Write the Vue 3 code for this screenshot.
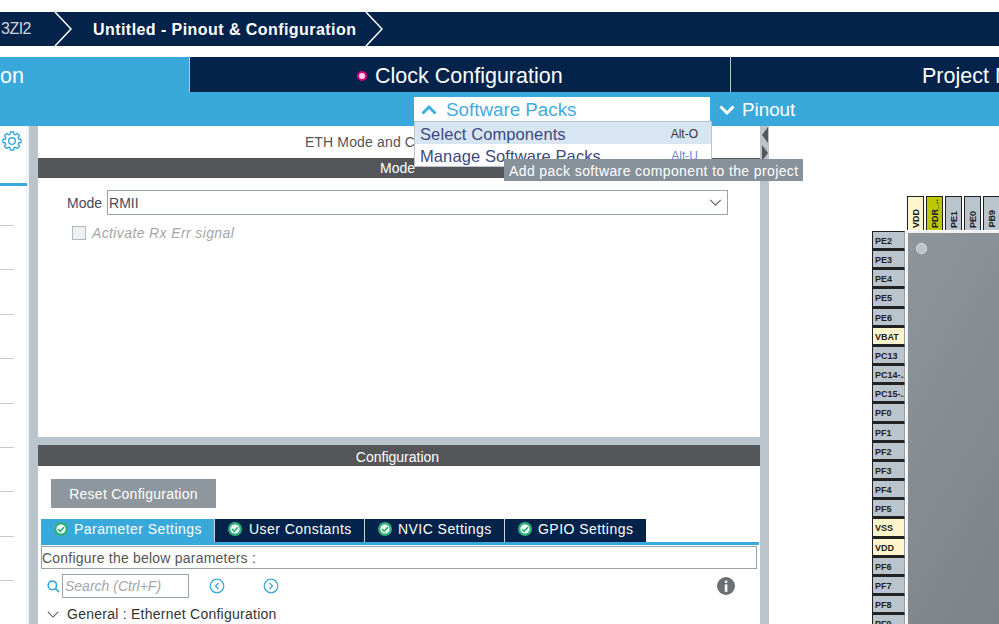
<script setup>
const leftPins = [
  ['PE2'], ['PE3'], ['PE4'], ['PE5'], ['PE6'], ['VBAT', 'power'], ['PC13'], ['PC14-..'], ['PC15-..'],
  ['PF0'], ['PF1'], ['PF2'], ['PF3'], ['PF4'], ['PF5'], ['VSS', 'power'], ['VDD', 'power'],
  ['PF6'], ['PF7'], ['PF8'], ['PF9']
]
const topPins = [['VDD', 'power'], ['PDR_..', 'lime'], ['PE1'], ['PE0'], ['PB9']]
const tabs = ['User Constants', 'NVIC Settings', 'GPIO Settings']
const ticks = 9

// outline of an eight-toothed gear around (12, 12)
const gearPath = (() => {
  const pt = (r, a) => `${(12 + r * Math.cos(a)).toFixed(2)} ${(12 + r * Math.sin(a)).toFixed(2)}`
  const step = Math.PI / 4
  let d = ''
  for (let i = 0; i < 8; i++) {
    const a = i * step
    d += `${i ? 'L' : 'M'}${pt(8.3, a - 0.3)} L${pt(11, a - 0.17)} L${pt(11, a + 0.17)} L${pt(8.3, a + 0.3)} `
  }
  return d + 'Z'
})()
</script>

<template>
  <div class="page">
    <div class="crumbs">
      <span class="crumb-mcu">3ZI2</span>
      <svg class="chev first" viewBox="0 0 18 34"><path d="M1 0 L17 17 L1 34" /></svg>
      <span class="crumb-title">Untitled - Pinout &amp; Configuration</span>
      <svg class="chev second" viewBox="0 0 18 34"><path d="M1 0 L17 17 L1 34" /></svg>
    </div>

    <div class="maintabs">
      <div class="mt active"><span>on</span></div>
      <div class="mt clock"><i class="dot"></i><span>Clock Configuration</span></div>
      <div class="mt project"><span>Project Manager</span></div>
    </div>

    <div class="subbar">
      <div class="sp-btn">
        <svg class="caret" viewBox="0 0 16 10"><path d="M1.5 8.5 L8 2 L14.5 8.5" /></svg>
        <span>Software Packs</span>
      </div>
      <div class="pinout-btn">
        <svg class="caret" viewBox="0 0 16 10"><path d="M1.5 1.5 L8 8 L14.5 1.5" /></svg>
        <span>Pinout</span>
      </div>
      <div class="menu">
        <div class="mi hover"><span>Select Components</span><small>Alt-O</small></div>
        <div class="mi"><span>Manage Software Packs</span><small class="blue">Alt-U</small></div>
      </div>
      <div class="tooltip">Add pack software component to the project</div>
    </div>

    <div class="work">
      <aside class="side">
        <svg class="gear" viewBox="0 0 24 24">
          <path :d="gearPath" />
          <circle cx="12" cy="12" r="4" />
        </svg>
        <div class="side-line"></div>
        <div class="ticks"><i v-for="n in ticks" :key="n"></i></div>
      </aside>

      <div class="split-v"></div>

      <main class="panel">
        <section class="mode-area">
          <div class="eth-title">ETH Mode and Configuration</div>
          <div class="bar mode-bar">Mode</div>
          <div class="mode-row">
            <label>Mode</label>
            <div class="select">
              <span>RMII</span>
              <svg viewBox="0 0 14 8"><path d="M1 1 L7 7 L13 1" /></svg>
            </div>
          </div>
          <div class="check-row"><i class="check"></i><em>Activate Rx Err signal</em></div>
        </section>

        <div class="split-h"></div>

        <section class="config-area">
          <div class="bar cfg">Configuration</div>
          <button class="reset">Reset Configuration</button>
          <div class="ctabs">
            <div class="ctab on">
              <svg class="ok" viewBox="0 0 14 14"><circle cx="7" cy="7" r="5.8" /><path d="M4 7.2 L6.2 9.3 L10 5.2" /></svg>
              <span>Parameter Settings</span>
            </div>
            <div v-for="t in tabs" :key="t" class="ctab">
              <svg class="ok" viewBox="0 0 14 14"><circle cx="7" cy="7" r="5.8" /><path d="M4 7.2 L6.2 9.3 L10 5.2" /></svg>
              <span>{{ t }}</span>
            </div>
          </div>
          <div class="tab-rule"></div>
          <div class="describe">Configure the below parameters :</div>
          <div class="search-row">
            <svg class="mag" viewBox="0 0 14 14"><circle cx="5.8" cy="5.8" r="4.5" /><path d="M9 9 L13 13" /></svg>
            <div class="search">Search (Ctrl+F)</div>
            <svg class="nav prev" viewBox="0 0 16 16"><circle cx="8" cy="8" r="6.8" /><path d="M9.5 5 L6.5 8 L9.5 11" /></svg>
            <svg class="nav next" viewBox="0 0 16 16"><circle cx="8" cy="8" r="6.8" /><path d="M6.5 5 L9.5 8 L6.5 11" /></svg>
            <svg class="info" viewBox="0 0 18 18"><circle cx="9" cy="9" r="9" /><rect x="7.8" y="3.4" width="2.6" height="2.6" rx="1.2" /><rect x="7.8" y="7.4" width="2.6" height="7.4" /></svg>
          </div>
          <div class="general">
            <svg viewBox="0 0 14 8"><path d="M1 1 L7 7 L13 1" /></svg>
            <span>General : Ethernet Configuration</span>
          </div>
        </section>
      </main>

      <div class="split-r">
        <i class="tri left"></i>
        <i class="tri right"></i>
      </div>

      <div class="pinout">
        <div class="top-pins">
          <div v-for="p in topPins" :key="p[0]" class="tpin" :class="p[1]"><span>{{ p[0] }}</span></div>
        </div>
        <div class="chip-row">
          <div class="left-pins">
            <div v-for="p in leftPins" :key="p[0] + p[1]" class="lpin" :class="p[1]">{{ p[0] }}</div>
          </div>
          <div class="chip"><i class="pin1"></i></div>
        </div>
      </div>
    </div>
  </div>
</template>

<style>
html, body { margin: 0; background: #fff; overflow: hidden; }
</style>

<style scoped>
.page {
  width: 999px;
  height: 624px;
  overflow: hidden;
  background: #fff;
  font-family: "Liberation Sans", Arial, sans-serif;
  color: #333;
  display: flex;
  flex-direction: column;
}
.crumbs {
  margin-top: 12px;
  height: 34px;
  background: #03234b;
  color: #fff;
  display: flex;
  align-items: center;
  flex: none;
}
.crumb-mcu { margin-left: 1px; width: 53px; font-size: 16px; color: #cdd5de; letter-spacing: -.5px; }
.chev { width: 18px; height: 34px; flex: none; }
.chev path { fill: none; stroke: #fff; stroke-width: 1.5; }
.crumb-title { margin: 0 9px 0 21px; padding-top: 2px; font-size: 16px; font-weight: 700; letter-spacing: .44px; white-space: nowrap; }

.maintabs {
  margin-top: 11px;
  height: 35px;
  display: flex;
  flex: none;
  font-size: 21.5px;
  color: #fff;
}
.mt { display: flex; align-items: center; white-space: nowrap; overflow: hidden; box-sizing: border-box; padding-top: 4px; }
.active { width: 189px; background: #39a9dc; }
.clock { width: 541px; background: #03234b; padding-left: 167px; border-left: 1px solid #b9c4cc; }
.project { flex: 1; background: #03234b; padding-left: 191px; border-left: 1px solid #b9c4cc; }
.dot { width: 10px; height: 10px; border-radius: 50%; background: #f7d5e8; border: 2.5px solid #e6007e; box-sizing: border-box; margin: 0 8px 2px 0; flex: none; }

.subbar {
  position: relative;
  height: 34px;
  background: #39a9dc;
  flex: none;
  display: flex;
  align-items: flex-end;
  padding-left: 414px;
  z-index: 2;
}
.sp-btn {
  width: 296px;
  height: 29px;
  box-sizing: border-box;
  background: #fff;
  color: #3fade0;
  font-size: 18.8px;
  display: flex;
  align-items: center;
  gap: 9px;
  padding: 0 0 4px 7px;
}
.pinout-btn {
  height: 29px;
  box-sizing: border-box;
  display: flex;
  align-items: center;
  gap: 7px;
  padding: 0 0 4px 9px;
  color: #fff;
  font-size: 18.8px;
}
.caret { width: 16px; height: 10px; flex: none; fill: none; stroke: currentColor; stroke-width: 2.9; }
.menu {
  position: absolute;
  left: 414px;
  top: 29px;
  width: 298px;
  height: 46px;
  box-sizing: border-box;
  background: #fff;
  border: 1px solid #b9c4cc;
  color: #3d4a80;
  font-size: 16.5px;
  letter-spacing: .1px;
}
.mi { height: 22px; box-sizing: border-box; padding: 2px 13px 0 5px; display: flex; align-items: center; justify-content: space-between; }
.mi.hover { background: #d7e6f2; }
.mi small { font-size: 12px; letter-spacing: 0; color: #333; }
.mi small.blue { color: #6f86d6; }
.tooltip {
  position: absolute;
  left: 504px;
  top: 67px;
  width: 299px;
  height: 22px;
  box-sizing: border-box;
  background: #87919a;
  color: #fff;
  font-size: 14px;
  letter-spacing: .39px;
  line-height: 24px;
  padding-left: 5px;
  white-space: nowrap;
}

.work { flex: 1; display: flex; min-height: 0; }
.side { width: 26px; flex: none; position: relative; border-right: 3px solid #f1f3f4; display: flex; flex-direction: column; }
.gear { width: 20px; height: 20px; margin: 5px 0 0 2px; flex: none; fill: none; stroke: #39a9dc; stroke-width: 1.7; stroke-linejoin: round; }
.side-line { height: 3px; width: 27px; background: #39a9dc; margin-top: 32px; flex: none; }
.ticks { display: flex; flex-direction: column; gap: 43.4px; margin-top: 39px; }
.ticks i { display: block; width: 14px; height: 1px; background: #c3cbd0; }
.split-v { width: 9px; flex: none; background: #b9c4cc; }
.panel { width: 722px; flex: none; display: flex; flex-direction: column; background: #fff; }
.mode-area { height: 311px; flex: none; }
.eth-title { height: 32px; line-height: 32px; padding-right: 3px; text-align: center; font-size: 14px; color: #555; letter-spacing: .15px; }
.bar { height: 21px; line-height: 21px; padding-right: 3px; background: #54565a; color: #fff; text-align: center; font-size: 14px; }
.bar.mode-bar { height: 20px; }
.bar.cfg { line-height: 24px; }
.mode-row { display: flex; align-items: center; margin: 12px 0 0 29px; gap: 5px; }
.mode-row label { font-size: 14px; color: #454a60; }
.select {
  width: 621px;
  height: 25px;
  box-sizing: border-box;
  border: 1px solid #9aa3a8;
  border-top-width: 1.5px;
  display: flex;
  align-items: center;
  justify-content: space-between;
  padding: 0 5px 0 1px;
  font-size: 14px;
  color: #454a60;
}
.select svg { width: 13px; height: 7px; fill: none; stroke: #5a6570; stroke-width: 1.3; }
.check-row { display: flex; align-items: center; gap: 6px; margin: 10px 0 0 34px; font-size: 14px; letter-spacing: .38px; color: #a3a7ab; }
.check { width: 14px; height: 14px; box-sizing: border-box; background: #eef0f1; border: 1.5px solid #b3babf; }

.split-h { height: 8px; flex: none; background: #b9c4cc; }
.config-area { flex: 1; min-height: 0; position: relative; }
.reset {
  display: block;
  width: 165px;
  height: 29px;
  margin: 13px 0 0 13px;
  padding: 0;
  background: #8f979e;
  border: 0;
  color: #fff;
  font: 14px "Liberation Sans", Arial, sans-serif;
  letter-spacing: .26px;
}
.ctabs { display: flex; margin: 11px 0 0 3px; height: 23px; }
.ctab {
  background: #03234b;
  color: #fff;
  font-size: 14px;
  letter-spacing: .45px;
  display: flex;
  align-items: center;
  gap: 6px;
  padding: 0 0 4px 13px;
  box-sizing: border-box;
  width: 140px;
  border-right: 1px solid #cfd6db;
}
.ctab:nth-child(2) { width: 150px; gap: 7px; }
.ctab:last-child { width: 141px; border-right: 0; }
.ctab.on { background: #39a9dc; width: 174px; }
.ok { width: 14px; height: 14px; flex: none; }
.ok circle { fill: #fff; stroke: #2fb27a; stroke-width: 2.4; }
.ok path { fill: none; stroke: #2fb27a; stroke-width: 1.8; }
.tab-rule { height: 3px; background: #39a9dc; margin: 0 1px 0 3px; }
.describe {
  margin: 1px 3px 0 3px;
  height: 23px;
  box-sizing: border-box;
  border: 1px solid #9aa3a8;
  font-size: 14px;
  letter-spacing: .22px;
  line-height: 23px;
  color: #555;
}
.search-row { position: relative; height: 24px; margin-top: 5px; display: flex; align-items: center; }
.mag { width: 13px; height: 13px; margin-left: 9px; flex: none; fill: none; stroke: #39a9dc; stroke-width: 1.8; }
.search {
  width: 127px;
  height: 24px;
  margin-left: 2px;
  box-sizing: border-box;
  border: 1px solid #9aa3a8;
  font-size: 14px;
  font-style: italic;
  color: #a3a7ab;
  line-height: 22px;
  padding-left: 2px;
  flex: none;
}
.nav { width: 16px; height: 16px; flex: none; fill: none; stroke: #39a9dc; stroke-width: 1.3; }
.prev { margin-left: 20px; }
.next { margin-left: 38px; }
.info { width: 18px; height: 18px; margin-left: 438px; fill: #6b7075; flex: none; }
.info rect { fill: #fff; }
.general { display: flex; align-items: center; gap: 8px; margin: 8px 0 0 9px; font-size: 14px; letter-spacing: .25px; color: #333; }
.general svg { width: 12px; height: 7px; fill: none; stroke: #555; stroke-width: 1.2; }

.split-r { width: 9px; flex: none; background: #b9c4cc; margin-right: 1px; position: relative; }
.tri { position: absolute; left: 2px; width: 0; height: 0; border-style: solid; }
.tri.left { top: 1px; border-width: 8px 6px 8px 0; border-color: transparent #54565a transparent transparent; }
.tri.right { top: 19px; border-width: 8px 0 8px 6px; border-color: transparent transparent transparent #54565a; }

.pinout { flex: 1; min-width: 0; padding: 70px 0 0 102px; overflow: hidden; }
.top-pins { display: flex; gap: 2px; margin-left: 35px; height: 35px; }
.tpin {
  width: 17px;
  flex: none;
  height: 34px;
  box-sizing: border-box;
  background: #b9c4cc;
  border: 1px solid #222;
  border-bottom: 0;
  display: flex;
  align-items: flex-end;
  justify-content: center;
  overflow: hidden;
}
.tpin span {
  writing-mode: vertical-rl;
  transform: rotate(180deg);
  font-size: 9px;
  font-weight: 700;
  color: #222;
  padding-top: 2px;
  white-space: nowrap;
}
.tpin.power { background: #fff5cc; }
.tpin.lime { background: #bcc800; }
.chip-row { display: flex; gap: 1px; }
.left-pins { width: 33px; flex: none; display: grid; grid-auto-rows: 19.16px; }
.lpin {
  box-sizing: border-box;
  background: #b9c4cc;
  border: 1px solid #222;
  border-right-color: #999;
  border-bottom-width: 2px;
  padding-left: 2px;
  font-size: 9px;
  font-weight: 700;
  line-height: 18px;
  color: #222;
  overflow: hidden;
  white-space: nowrap;
}
.lpin.power { background: #fff5cc; }
.chip {
  flex: 1;
  height: 410px;
  position: relative;
  background: linear-gradient(120deg, #8e969b, #7b8388);
  border-top: 2px solid #eef0f1;
  border-left: 2px solid #eef0f1;
  box-sizing: border-box;
}
.pin1 { position: absolute; left: 8px; top: 10px; width: 11px; height: 11px; box-sizing: border-box; border-radius: 50%; background: #b9c4cc; border: 1px solid #e0e4e6; }
</style>
